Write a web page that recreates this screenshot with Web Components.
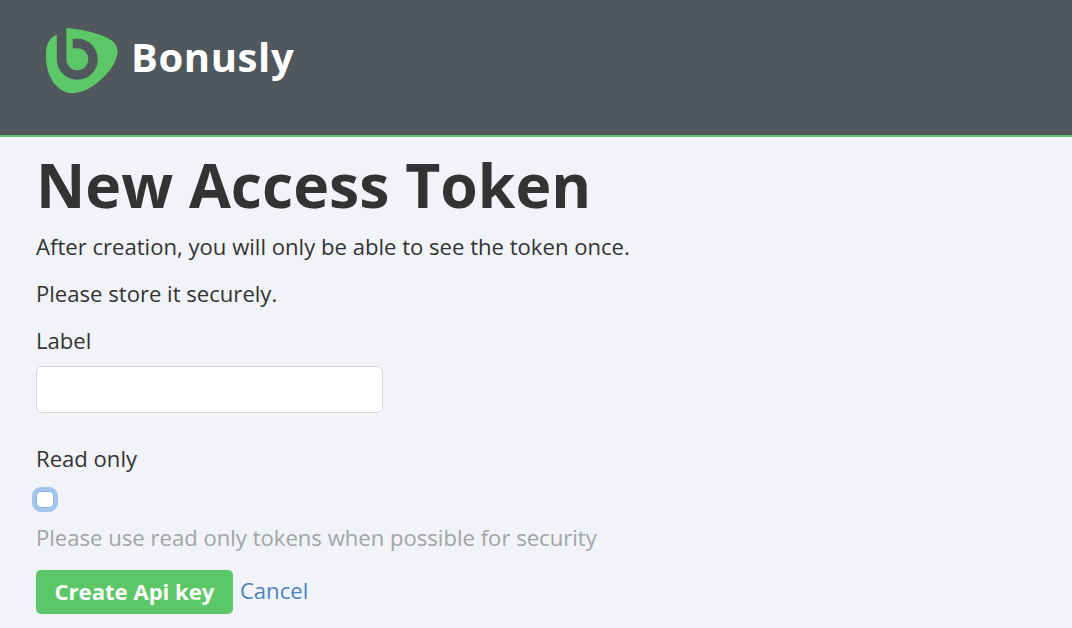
<!DOCTYPE html>
<html>
<head>
<meta charset="utf-8">
<title>New Access Token</title>
<style>
  html, body { margin: 0; padding: 0; background: #f1f3f8; }
  body { font-family: "Open Sans", sans-serif; color: #333; overflow: hidden; }
</style>
</head>
<body>
<site-header></site-header>
<token-form></token-form>

<script>
class SiteHeader extends HTMLElement {
  constructor() {
    super();
    this.attachShadow({ mode: "open" });
  }

  connectedCallback() {
    this.shadowRoot.innerHTML = `
      <style>
        :host {
          display: flex;
          align-items: flex-start;
          box-sizing: border-box;
          height: 137px;
          padding: 22px 0 0 40px;
          background: #50575d;
          border-bottom: 2px solid #63c16d;
        }
        svg { width: 84px; height: 74px; flex: none; }
        span {
          margin: 5px 0 0 7px;
          font: 700 40px/60px "Open Sans", sans-serif;
          color: #fff;
          letter-spacing: 0.6px;
        }
      </style>
      <svg viewBox="0 0 84 74">
        <path fill="#5cc766" d="M27 6C40 7 60 11 71 18C78 22 79 30 76 37C71 50 60 60 48 67C38 72 28 73 20 67C10 60 5 45 6 30C6 24 9 17 14 14Z"/>
        <path fill="none" stroke="#50575d" stroke-width="9.5" d="M21.6 0V37.3A15.7 15.7 0 1 0 37.3 21.6H32.7"/>
      </svg>
      <span>Bonusly</span>
    `;
  }
}

class FormField extends HTMLElement {
  constructor() {
    super();
    this.attachShadow({ mode: "open" });
    this.shadowRoot.innerHTML = `
      <style>
        :host { display: block; }
        label { display: block; font-size: 22.1px; line-height: 32px; color: #333; }
      </style>
      <label></label>
      <slot></slot>
    `;
  }

  connectedCallback() {
    this.shadowRoot.querySelector("label").textContent = this.getAttribute("label");
  }
}

class TokenForm extends HTMLElement {
  constructor() {
    super();
    this.attachShadow({ mode: "open" });
  }

  connectedCallback() {
    this.shadowRoot.innerHTML = `
      <style>
        :host {
          display: block;
          padding: 0 36px;
          font: 400 22.1px/32px "Open Sans", sans-serif;
          color: #333;
        }
        h1 {
          margin: 12px 0 0;
          font-size: 60.7px;
          line-height: 72px;
          font-weight: 700;
          color: #333;
        }
        p { margin: 15px 0 0; }
        h1 + p { margin-top: 9px; }
        form-field { margin-top: 15px; }
        .text {
          display: block;
          box-sizing: border-box;
          width: 347px;
          height: 47px;
          margin-top: 10px;
          background: #fff;
          border: 1px solid #d6d6d8;
          border-radius: 6px;
        }
        .read { margin-top: 29px; }
        .check {
          display: block;
          box-sizing: border-box;
          width: 18px;
          height: 17px;
          margin: 17px 0 0 0;
          appearance: none;
          background: #fff;
          border: 1px solid #8fb4e0;
          border-radius: 5px;
          box-shadow: 0 0 0 4px #a3c6f0;
        }
        .hint { margin: 13px 0 0; color: #a2a4a6; }
        .actions { display: flex; align-items: center; gap: 7px; margin-top: 17px; }
        button {
          height: 44px;
          padding: 0 18.5px 2px;
          border: 0;
          border-radius: 5px;
          background: #5cc766;
          color: #fff;
          font: 700 22.1px "Open Sans", sans-serif;
        }
        a { color: #4a83c4; text-decoration: none; margin-top: -5px; }
      </style>
      <h1>New Access Token</h1>
      <p>After creation, you will only be able to see the token once.</p>
      <p>Please store it securely.</p>
      <form-field label="Label"><input class="text" type="text"></form-field>
      <form-field class="read" label="Read only"><input class="check" type="checkbox"></form-field>
      <p class="hint">Please use read only tokens when possible for security</p>
      <div class="actions">
        <button type="button">Create Api key</button>
        <a href="#">Cancel</a>
      </div>
    `;
  }
}

customElements.define("site-header", SiteHeader);
customElements.define("form-field", FormField);
customElements.define("token-form", TokenForm);
</script>
</body>
</html>
